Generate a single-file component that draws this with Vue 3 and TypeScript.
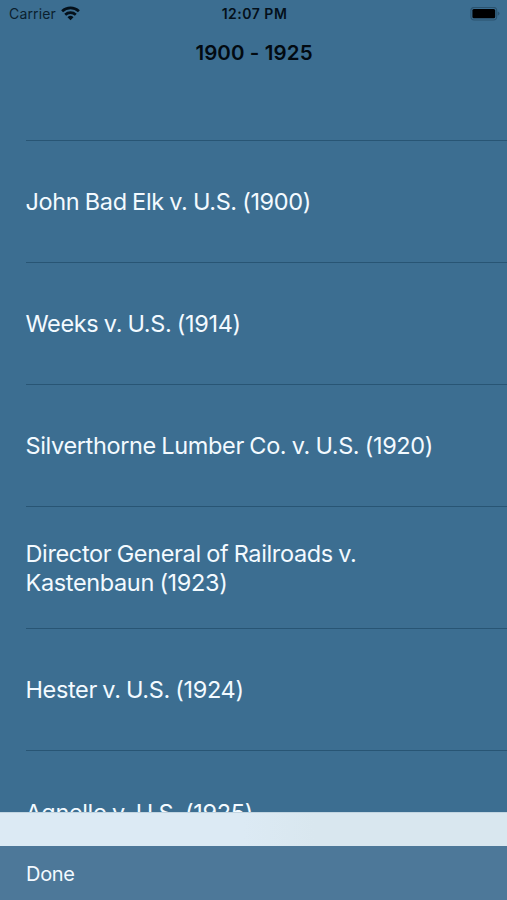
<script setup lang="ts">
interface CourtCase { title: string }
const cases: CourtCase[] = [
  { title: 'John Bad Elk v. U.S. (1900)' },
  { title: 'Weeks v. U.S. (1914)' },
  { title: 'Silverthorne Lumber Co. v. U.S. (1920)' },
  { title: 'Director General of Railroads v.\nKastenbaun (1923)' },
  { title: 'Hester v. U.S. (1924)' },
  { title: 'Agnello v. U.S. (1925)' },
]
</script>

<template>
  <main class="screen">
    <header class="status">
      <div class="carrier">
        <span>Carrier</span>
        <svg width="19" height="15" viewBox="0 0 19 15" fill="none" stroke="#04101a" stroke-width="2.7">
          <path d="M1.1 5.3C5.9.8 13.1.8 17.9 5.3" />
          <path d="M4.2 8.7C7.2 5.9 11.8 5.9 14.8 8.7" />
          <path d="M6.5 11.2Q9.5 8.5 12.5 11.2L9.5 14.3Z" fill="#04101a" stroke="none" />
        </svg>
      </div>
      <time>12:07 PM</time>
      <svg class="battery" width="30" height="14" viewBox="0 0 30 14">
        <rect x=".9" y=".4" width="25.8" height="12.6" rx="3.4" fill="none" stroke="#2b536f" stroke-width="1.1" />
        <rect x="2.4" y="2" width="22.8" height="9.3" rx="1.5" fill="#000" />
        <path d="M27.7 4.4Q29.5 5 29.5 6.6T27.7 8.8Z" fill="#2b536f" />
      </svg>
    </header>
    <h1>1900 - 1925</h1>
    <ul class="cases">
      <li v-for="item in cases" :key="item.title"><span>{{ item.title }}</span></li>
    </ul>
    <div class="band"></div>
    <footer><button type="button">Done</button></footer>
  </main>
</template>

<style>
body { margin: 0; background: #3c6e91; }
</style>
<style scoped>
.screen { height: 900px; display: flex; flex-direction: column; overflow: hidden; background: #3c6e91; font-family: Inter, "Liberation Sans", sans-serif; color: #04101a; }
.status { flex: none; height: 27px; box-sizing: border-box; padding: 0 7px 0 9px; display: grid; grid-template-columns: 1fr auto 1fr; align-items: center; font-size: 14px; }
.carrier { display: flex; align-items: center; gap: 5px; height: 18px; color: #0b1f2e; letter-spacing: .15px; }
.carrier svg { margin-bottom: 1px; }
time { font-weight: 600; letter-spacing: .5px; }
.battery { justify-self: end; }
h1 { flex: none; height: 49px; margin: 0; padding-left: 1px; font-size: 20.5px; line-height: 51px; font-weight: 600; text-align: center; letter-spacing: .1px; color: #020a11; }
.cases { flex: 1; min-height: 0; margin: 0; padding: 64px 0 0; overflow: hidden; list-style: none; }
li { height: 122.1px; box-sizing: border-box; margin-left: 26px; border-top: 1px solid #285574; display: flex; align-items: center; color: #f3faff; font-size: 23.5px; line-height: 29px; letter-spacing: -.36px; word-spacing: -.8px; white-space: pre-line; }
li span { margin-left: -.5px; }
.band { flex: none; height: 34px; box-sizing: border-box; border-top: 1px solid #c2d5e1; background: linear-gradient(90deg, #dceaf4 0, #dceaf4 48%, #d9e7ef 62%); }
footer { flex: none; height: 54px; box-sizing: border-box; display: flex; align-items: center; padding: 1px 0 0 26px; background: #4d7899; }
button { border: 0; padding: 0; background: none; color: #f3faff; font: 20px Inter, "Liberation Sans", sans-serif; letter-spacing: -.3px; }
</style>
